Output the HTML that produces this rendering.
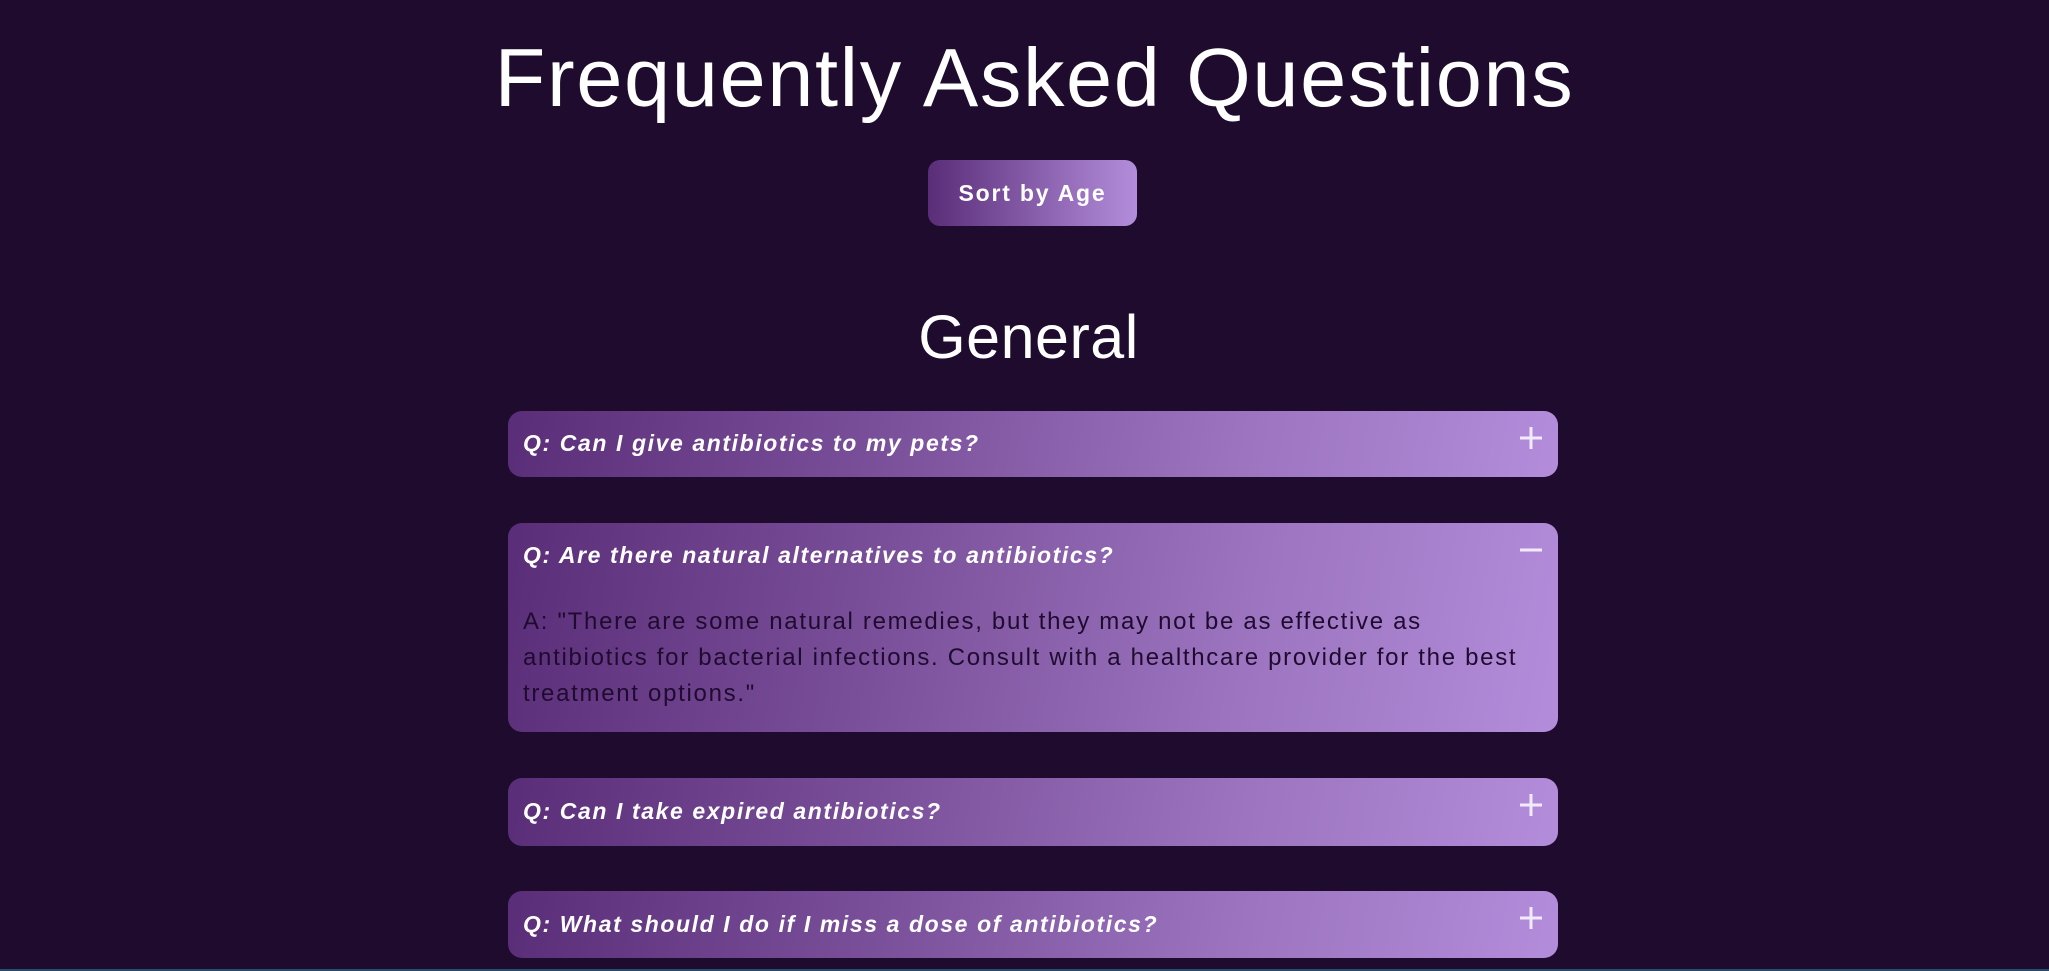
<!DOCTYPE html>
<html><head><meta charset="utf-8"><style>
html,body{margin:0;padding:0;}
body{width:2049px;height:971px;background:#1f0b2e;position:relative;overflow:hidden;font-family:"Liberation Sans",sans-serif;color:#fff;}
h1{position:absolute;left:10px;width:2049px;text-align:center;margin:0;font-weight:400;font-size:83px;top:30px;line-height:96px;letter-spacing:1.6px;}
.btn{position:absolute;left:928px;top:160px;width:209px;height:66px;border-radius:12px;background:linear-gradient(90deg,#5a2d78,#b38ddb);font-weight:700;font-size:23px;line-height:66px;text-align:center;letter-spacing:1.8px;}
h2{position:absolute;left:4px;width:2049px;text-align:center;margin:0;font-weight:400;font-size:61px;top:301px;line-height:72px;letter-spacing:.5px;}
.c{position:absolute;left:508px;width:1050px;border-radius:14px;background:linear-gradient(100deg,#5a2d78 0%,#7a4f9a 35%,#9c74bf 70%,#b38ddb 100%);}
.q{position:absolute;left:15px;font-weight:700;font-style:italic;font-size:23px;letter-spacing:1.6px;color:#fff;}
.a{position:absolute;left:15px;top:81px;font-size:24px;line-height:36px;color:#1e0b2e;letter-spacing:1.7px;white-space:nowrap;}
.ic{position:absolute;right:15px;top:15px;width:24px;height:24px;}
</style></head><body>
<h1>Frequently Asked Questions</h1>
<div class="btn">Sort by Age</div>
<h2>General</h2>
<div class="c" style="top:411px;height:66px"><div class="q" style="top:19px">Q: Can I give antibiotics to my pets?</div>
<svg class="ic" viewBox="0 0 24 24"><path d="M12 1V23M1 12H23" stroke="#f3eaff" stroke-width="3"/></svg></div>
<div class="c" style="top:523px;height:209px"><div class="q" style="top:19px">Q: Are there natural alternatives to antibiotics?</div>
<svg class="ic" viewBox="0 0 24 24"><path d="M1 12H23" stroke="#f3eaff" stroke-width="3"/></svg>
<div class="a">A: "There are some natural remedies, but they may not be as effective as<br>antibiotics for bacterial infections. Consult with a healthcare provider for the best<br>treatment options."</div></div>
<div class="c" style="top:778px;height:68px"><div class="q" style="top:20px">Q: Can I take expired antibiotics?</div>
<svg class="ic" viewBox="0 0 24 24"><path d="M12 1V23M1 12H23" stroke="#f3eaff" stroke-width="3"/></svg></div>
<div class="c" style="top:891px;height:67px"><div class="q" style="top:20px">Q: What should I do if I miss a dose of antibiotics?</div>
<svg class="ic" viewBox="0 0 24 24"><path d="M12 1V23M1 12H23" stroke="#f3eaff" stroke-width="3"/></svg></div>
<div style="position:absolute;left:0;top:969px;width:2049px;height:2px;background:#2a4a6a"></div>
</body></html>
